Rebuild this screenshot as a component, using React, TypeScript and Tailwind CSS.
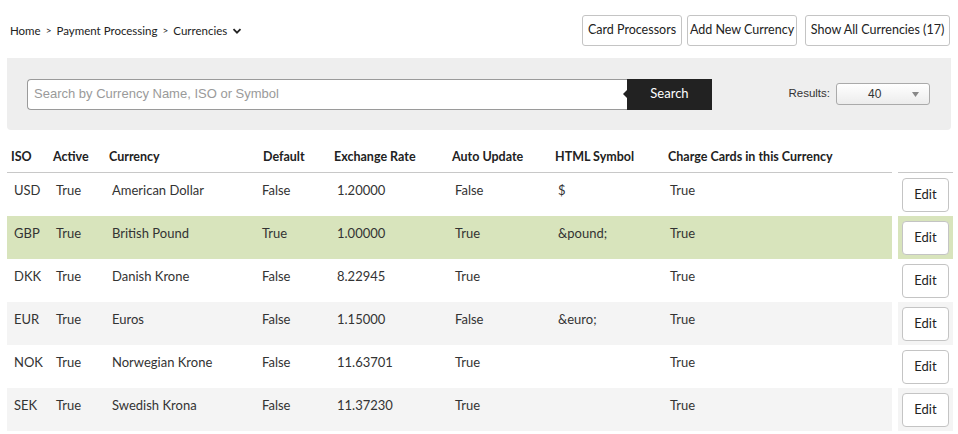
import React from 'react';

const rows = [
  { iso: 'USD', active: 'True', name: 'American Dollar', def: 'False', rate: '1.20000', auto: 'False', sym: '$', charge: 'True', bg: 'bg-white' },
  { iso: 'GBP', active: 'True', name: 'British Pound', def: 'True', rate: '1.00000', auto: 'True', sym: '&pound;', charge: 'True', bg: 'bg-[#d8e4bc]' },
  { iso: 'DKK', active: 'True', name: 'Danish Krone', def: 'False', rate: '8.22945', auto: 'True', sym: '', charge: 'True', bg: 'bg-white' },
  { iso: 'EUR', active: 'True', name: 'Euros', def: 'False', rate: '1.15000', auto: 'False', sym: '&euro;', charge: 'True', bg: 'bg-[#f4f4f4]' },
  { iso: 'NOK', active: 'True', name: 'Norwegian Krone', def: 'False', rate: '11.63701', auto: 'True', sym: '', charge: 'True', bg: 'bg-white' },
  { iso: 'SEK', active: 'True', name: 'Swedish Krona', def: 'False', rate: '11.37230', auto: 'True', sym: '', charge: 'True', bg: 'bg-[#f4f4f4]' },
];

// column grid shared by header and body
const cols = 'grid grid-cols-[42px_56px_154px_71px_118px_103px_113px_1fr]';

function TopButton({ label, className = '' }: { label: string; className?: string }) {
  return (
    <button className={`h-[31px] px-0 whitespace-nowrap rounded-[3px] border border-[#c4c4c4] bg-white text-[12.5px] text-[#222] ${className}`}>
      {label}
    </button>
  );
}

export default function App() {
  return (
    <div className="w-[958px] h-[434px] overflow-hidden bg-white text-[#333] font-['Lato',sans-serif]">
      {/* Breadcrumb + actions */}
      <div className="flex items-start justify-between pl-[10px] pr-[8px] pt-[15px] h-[58px]">
        <div className="flex items-center h-[31px] text-[11.5px] text-[#222]">
          <span>Home</span>
          <span className="mx-[5px] text-[10px]">&gt;</span>
          <span>Payment Processing</span>
          <span className="mx-[5px] text-[10px]">&gt;</span>
          <span>Currencies</span>
          <svg className="ml-[5px] w-[10px] h-[10px]" viewBox="0 0 10 10" fill="none" stroke="#222" strokeWidth="1.8">
            <path d="M1.5 3.2 L5 6.7 L8.5 3.2" />
          </svg>
        </div>
        <div className="flex">
          <TopButton label="Card Processors" className="w-[100px]" />
          <TopButton label="Add New Currency" className="w-[110px] ml-[5px]" />
          <TopButton label="Show All Currencies (17)" className="w-[145px] ml-[8px]" />
        </div>
      </div>

      {/* Search panel */}
      <div className="mx-[7px] h-[72px] bg-[#eeeeee] rounded-b-[4px] flex items-center pl-[20px] pr-[21px]">
        <div className="flex items-stretch h-[31px]">
          <div className="w-[600px] bg-white border border-[#9a9a9a] border-r-0 rounded-l-[4px] flex items-center pl-[6px] text-[13px] text-[#9a9a9a] font-['Liberation_Sans',sans-serif]">
            Search by Currency Name, ISO or Symbol
          </div>
          <div className="relative w-[85px] bg-[#222] text-white text-[13px] flex items-center justify-center">
            <span className="absolute left-[-4px] top-1/2 -translate-y-1/2 w-0 h-0 border-y-[4px] border-y-transparent border-r-[4px] border-r-[#222]" />
            Search
          </div>
        </div>
        <div className="flex-1" />
        <span className="text-[11.5px] text-[#333] font-['Liberation_Sans',sans-serif]">Results:</span>
        <div className="ml-[6px] w-[94px] h-[22px] rounded-[3px] border border-[#aaa] bg-gradient-to-b from-white to-[#ececec] flex items-center pl-[31px] pr-[10px] text-[12px] text-[#333] font-['Liberation_Sans',sans-serif]">
          <span className="flex-1">40</span>
          <svg className="w-[7px] h-[5px]" viewBox="0 0 7 5">
            <path d="M0 0 H7 L3.5 5 Z" fill="#888" />
          </svg>
        </div>
      </div>

      {/* Table */}
      <div className="mt-[12px] pl-[7px] pr-[5px]">
        <div className="flex">
          <div className={`${cols} w-[885px] h-[31px] items-center border-b border-[#c8c8c8] text-[12.5px] font-bold text-[#222]`}>
            <div className="pl-[4px]">ISO</div>
            <div className="pl-[4px]">Active</div>
            <div className="pl-[4px]">Currency</div>
            <div className="pl-[4px]">Default</div>
            <div className="pl-[4px]">Exchange Rate</div>
            <div className="pl-[4px]">Auto Update</div>
            <div className="pl-[4px]">HTML Symbol</div>
            <div className="pl-[4px]">Charge Cards in this Currency</div>
          </div>
          <div className="ml-[6px] w-[55px] border-b border-[#c8c8c8]" />
        </div>
        {rows.map((r) => (
          <div key={r.iso} className="flex">
            <div className={`${cols} w-[885px] h-[43px] pt-[8px] text-[13px] ${r.bg}`}>
              <div className="pl-[7px]">{r.iso}</div>
              <div className="pl-[7px]">{r.active}</div>
              <div className="pl-[7px]">{r.name}</div>
              <div className="pl-[3px]">{r.def}</div>
              <div className="pl-[7px]">{r.rate}</div>
              <div className="pl-[7px]">{r.auto}</div>
              <div className="pl-[7px]">{r.sym}</div>
              <div className="pl-[6px]">{r.charge}</div>
            </div>
            <div className={`ml-[6px] w-[55px] h-[43px] flex items-center justify-center ${r.bg}`}>
              <button className="w-[47px] h-[34px] rounded-[4px] border border-[#c4c4c4] bg-white text-[13px] text-[#222]">
                Edit
              </button>
            </div>
          </div>
        ))}
      </div>
    </div>
  );
}
